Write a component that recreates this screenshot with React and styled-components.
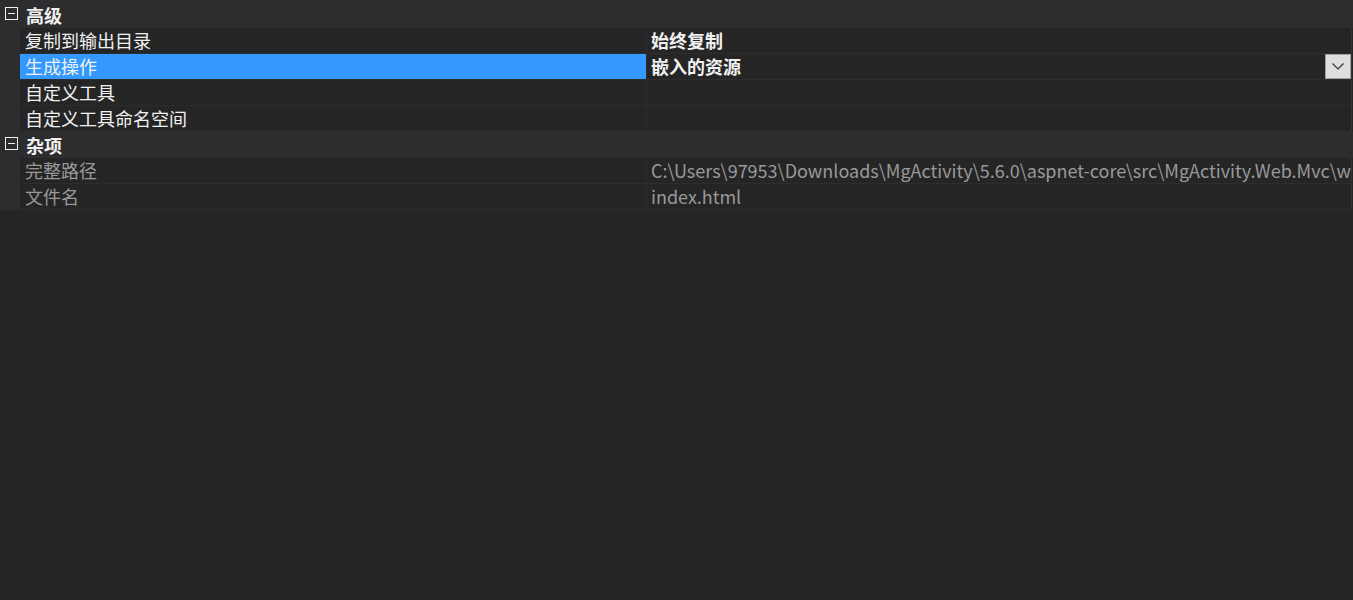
import React from 'react'
import styled, { createGlobalStyle } from 'styled-components'

const GlobalStyle = createGlobalStyle`
    html, body {
        margin: 0;
        padding: 0;
        background-color: #252526;
        height: 100%;
    }
    body {
        font-family: "Noto Sans CJK SC", "Noto Sans", sans-serif;
        overflow: hidden;
    }
`

const Grid = styled.div`
    width: 1353px;
    height: 600px;
    padding-top: 2px;
    box-sizing: border-box;
    background: linear-gradient(#2d2d30, #2d2d30) top left / 100% 2px no-repeat, #252526;
`

const Row = styled.div`
    display: flex;
    height: 26px;
    font-size: 18px;
    line-height: 25px;
    color: #f1f1f1;
`

const Gutter = styled.div`
    width: 20px;
    flex: none;
    background-color: #2d2d30;
    display: flex;
    justify-content: center;
    padding-top: 5px;
    box-sizing: border-box;
`

const CategoryRow = styled(Row)`
    background-color: #2d2d30;
`

const CategoryLabel = styled.div`
    font-weight: bold;
    padding-left: 6px;
    line-height: 26px;
`

const ToggleBox = styled.div`
    width: 13px;
    height: 13px;
    box-sizing: border-box;
    border: 1px solid #f1f1f1;
    position: relative;
    margin-left: 2px;
    &::after {
        content: '';
        position: absolute;
        left: 2px;
        right: 2px;
        top: 5px;
        height: 1px;
        background-color: #f1f1f1;
    }
`

const NameCell = styled.div`
    width: 627px;
    flex: none;
    box-sizing: border-box;
    padding-left: 5px;
    border-bottom: 1px solid #2d2d30;
    border-right: 1px solid #2d2d30;
    white-space: nowrap;
    overflow: hidden;
    background-color: ${p => (p.selected ? '#3399ff' : 'transparent')};
    color: ${p => (p.dim ? '#999999' : '#f1f1f1')};
`

const ValueCell = styled.div`
    flex: 1;
    min-width: 0;
    display: flex;
    align-items: flex-start;
    box-sizing: border-box;
    padding-left: 4px;
    border-bottom: 1px solid #2d2d30;
    border-right: 1px solid #333337;
    margin-right: 1px;
    white-space: nowrap;
    overflow: hidden;
    font-weight: ${p => (p.bold ? 'bold' : 'normal')};
    color: ${p => (p.dim ? '#999999' : '#f1f1f1')};
`

const ValueText = styled.span`
    flex: 1;
    min-width: 0;
    overflow: hidden;
`

const DropButton = styled.div`
    width: 26px;
    height: 25px;
    flex: none;
    box-sizing: border-box;
    background-color: #dedede;
    border: 1px solid #a0a0a0;
    display: flex;
    align-items: center;
    justify-content: center;
`

const categories = [
    {
        name: '高级',
        props: [
            { name: '复制到输出目录', value: '始终复制', bold: true },
            { name: '生成操作', value: '嵌入的资源', bold: true, selected: true, dropdown: true },
            { name: '自定义工具', value: '' },
            { name: '自定义工具命名空间', value: '' },
        ],
    },
    {
        name: '杂项',
        props: [
            { name: '完整路径', value: 'C:\\Users\\97953\\Downloads\\MgActivity\\5.6.0\\aspnet-core\\src\\MgActivity.Web.Mvc\\wwwroot\\index.html', dim: true },
            { name: '文件名', value: 'index.html', dim: true },
        ],
    },
]

const Chevron = () => (
    <svg width="12" height="7" viewBox="0 0 12 7">
        <path d="M0.5 0.5 L6 6 L11.5 0.5" fill="none" stroke="#333" strokeWidth="1.2" />
    </svg>
)

const App = () => {
    return (
        <>
            <GlobalStyle />
            <Grid>
                {categories.map(cat => (
                    <React.Fragment key={cat.name}>
                        <CategoryRow>
                            <Gutter>
                                <ToggleBox />
                            </Gutter>
                            <CategoryLabel>{cat.name}</CategoryLabel>
                        </CategoryRow>
                        {cat.props.map(p => (
                            <Row key={p.name}>
                                <Gutter />
                                <NameCell selected={p.selected} dim={p.dim}>{p.name}</NameCell>
                                <ValueCell bold={p.bold} dim={p.dim}>
                                    <ValueText>{p.value}</ValueText>
                                    {p.dropdown && <DropButton><Chevron /></DropButton>}
                                </ValueCell>
                            </Row>
                        ))}
                    </React.Fragment>
                ))}
            </Grid>
        </>
    )
}

export default App
